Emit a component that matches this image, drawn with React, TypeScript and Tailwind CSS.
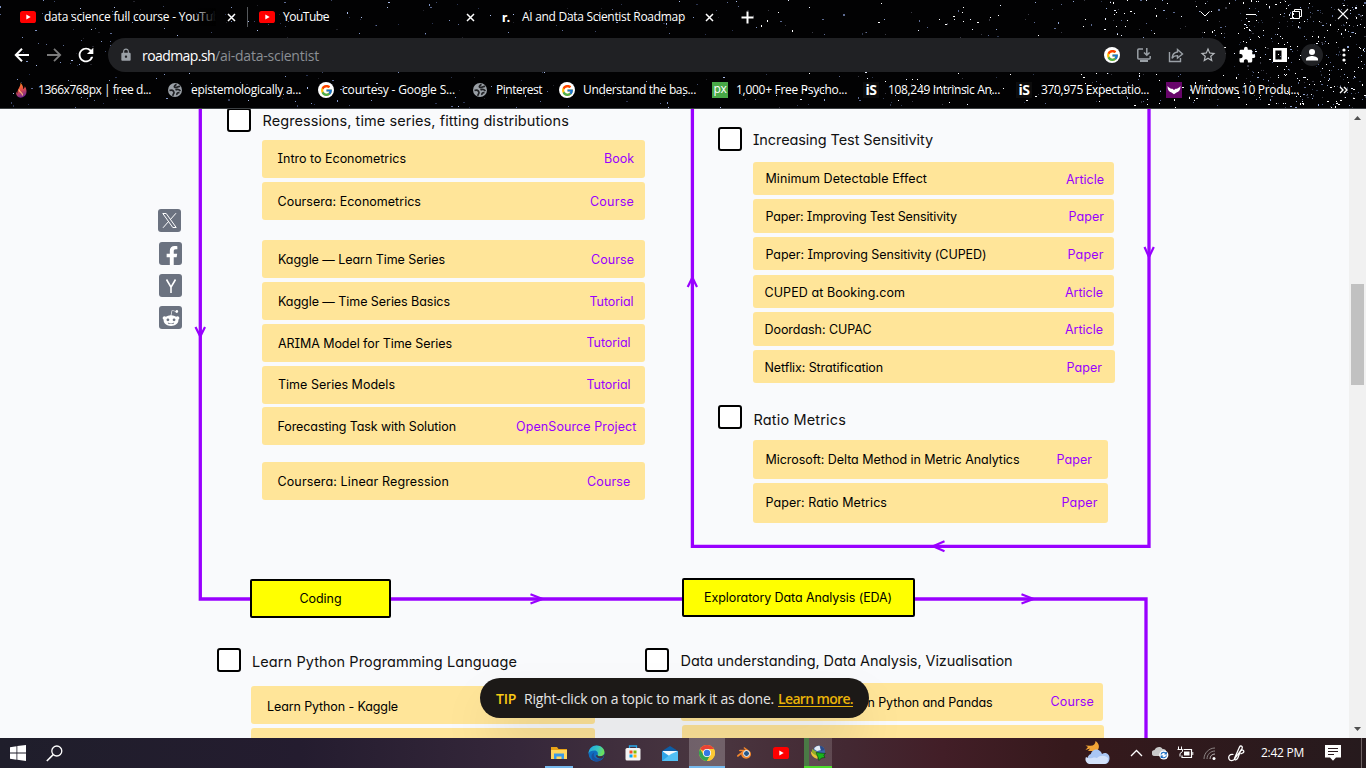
import { useLayoutEffect, useRef, useState, type ReactNode } from "react";
import { FcGoogle } from "react-icons/fc";
import { FaFacebookF, FaRedditAlien } from "react-icons/fa";
import { SiBlender } from "react-icons/si";
import { MdLock, MdExtension, MdRefresh, MdStarOutline } from "react-icons/md";

/* One line of text whose letter spacing is adjusted to fill a given width. */
function Fit({ w, className = "", children }: { w: number; className?: string; children: string }) {
  const ref = useRef<HTMLSpanElement>(null);
  const [spacing, setSpacing] = useState(0);
  useLayoutEffect(() => {
    const el = ref.current;
    if (!el) return;
    el.style.letterSpacing = "0px";
    setSpacing((w - el.getBoundingClientRect().width) / children.length);
  }, [w, children]);
  return (
    <span ref={ref} className={`inline-block shrink-0 whitespace-pre ${className}`} style={{ letterSpacing: `${spacing}px` }}>
      {children}
    </span>
  );
}

/* ---------- Starry theme background ---------- */
function makeStars() {
  let s = 20231;
  const rnd = () => {
    s = (s * 1664525 + 1013904223) % 4294967296;
    return s / 4294967296;
  };
  const dim = ["#2a3350", "#3d4766", "#5c6a92", "#7f93c4", "#23232b", "#a9bbe8"];
  const bright = ["#2f3950", "#5c6a92", "#8fa3d0", "#ffffff", "#e8efff", "#3a3a44", "#ffffff"];
  const out: { x: number; y: number; w: number; h: number; c: string }[] = [];
  for (let i = 0; i < 4200; i++) {
    const x = Math.floor(rnd() * 1366);
    const y = Math.floor(rnd() * 108);
    const keep = x > 1240 ? 1 : x > 1080 ? 0.42 : x > 760 ? 0.18 : 0.15;
    const r = rnd();
    const pal = x > 760 ? bright : dim;
    const c = pal[Math.floor(rnd() * pal.length)];
    const w = rnd() > 0.85 ? 2 : 1;
    const h = rnd() > 0.9 ? 2 : 1;
    if (r < keep) out.push({ x, y, w, h, c });
  }
  return out;
}
const STARS = makeStars();

function Stars() {
  return (
    <svg className="absolute inset-0" width="1366" height="108" shapeRendering="crispEdges">
      {STARS.map((p, i) => (
        <rect key={i} x={p.x} y={p.y} width={p.w} height={p.h} fill={p.c} />
      ))}
    </svg>
  );
}

/* ---------- Small icons ---------- */
const YouTubeIcon = () => (
  <svg width="16" height="12" viewBox="0 0 16 12" className="shrink-0">
    <rect width="16" height="12" rx="2.6" fill="#f00" />
    <path d="M6.3 3.4v5.2L10.7 6z" fill="#fff" />
  </svg>
);
const CloseIcon = () => (
  <svg width="9" height="9" viewBox="0 0 9 9" className="shrink-0">
    <path d="M1 1l7 7M8 1l-7 7" stroke="#fff" strokeWidth="1.5" />
  </svg>
);
const GoogleBadge = () => (
  <span className="flex size-4 shrink-0 items-center justify-center rounded-full bg-white">
    <FcGoogle size={13} />
  </span>
);
const GlobeIcon = () => (
  <svg width="16" height="16" viewBox="0 0 16 16" className="shrink-0">
    <circle cx="8" cy="8" r="7" fill="#9aa0a6" />
    <path
      d="M2.500 8.500C5 7.500 6.500 8.500 7 10.500c.3 1.300-1.300 1.300-1 3.300M13.200 4.500C11 4 10 6 8 5.500 6.500 5 8 3 9.500 2.200M8.500 8c1.500-.8 3.500-.5 5 .8M10 13c-.5-1.500.5-2.500 2.500-2.300"
      stroke="#202124"
      strokeWidth="1.700"
      fill="none"
    />
  </svg>
);
const FlameIcon = () => (
  <svg width="16" height="16" viewBox="0 0 16 16" className="shrink-0">
    <defs>
      <linearGradient id="flame" x1="0" y1="0" x2="0.3" y2="1">
        <stop offset="0" stopColor="#ffa31a" />
        <stop offset="0.5" stopColor="#f0543c" />
        <stop offset="1" stopColor="#7d2a8e" />
      </linearGradient>
    </defs>
    <path d="M7.500 .3c.6 2 3.500 3.800 2.500 7 1-.5 1.800-1.600 1.800-3 2.800 4 2.400 10-2.800 11.200C5 16.300 2.500 13.300 3.200 9.500c.3 1 .7 1.600 1.300 2C3.800 7.500 8 5 7.500 .3z" fill="url(#flame)" />
    <path d="M6 7.500c.2 3 4 3 3.500 6" stroke="#fcc07a" strokeWidth="1.100" fill="none" />
  </svg>
);
const PxIcon = () => (
  <span className="flex size-4 shrink-0 items-center justify-center bg-[#48a947] pb-[2px] font-['Open_Sans',sans-serif] text-[12px] leading-none tracking-[-0.3px] text-white">
    px
  </span>
);
const IsIcon = () => (
  <span className="flex size-4 shrink-0 items-center justify-center bg-[#0c0c0c] font-['Open_Sans',sans-serif] text-[14px] leading-none font-bold tracking-[-0.5px] text-white">
    iS
  </span>
);
const WingIcon = () => (
  <svg width="16" height="16" viewBox="0 0 16 16" className="shrink-0">
    <rect width="16" height="16" fill="#68056b" />
    <path d="M1.500 4C3 6 5 7 6.500 6.800L8 8l1.500-1.200C11 7 13 6 14.500 4c0 4-1.500 6-4 6.500L8 12.200l-2.500-1.700C3 10 1.500 8 1.500 4z" fill="#fff" />
  </svg>
);

/* ---------- Browser chrome ---------- */
function TabStrip() {
  return (
    <div className="flex h-[34px] items-center text-[12px] text-white">
      <div className="flex w-[247px] items-center pl-5">
        <YouTubeIcon />
        <div className="relative ml-2 w-[172px] overflow-hidden">
          <Fit w={176}>data science full course - YouTub</Fit>
          <div className="absolute inset-y-0 right-0 w-6 bg-linear-to-r from-transparent to-black" />
        </div>
        <div className="ml-[11px] flex">
          <CloseIcon />
        </div>
      </div>
      <div className="h-5 w-px bg-[#55585c]" />
      <div className="flex w-[239px] items-center pr-[12px] pl-[11px]">
        <YouTubeIcon />
        <div className="ml-2">
          <Fit w={46}>YouTube</Fit>
        </div>
        <div className="ml-auto flex">
          <CloseIcon />
        </div>
      </div>
      <div className="flex w-[239px] items-center pr-[12px] pl-[15px]">
        <span className="w-[20px] font-['Lato',sans-serif] text-[14px] leading-none font-black">r.</span>
        <Fit w={163}>AI and Data Scientist Roadmap</Fit>
        <div className="ml-auto flex">
          <CloseIcon />
        </div>
      </div>
      <svg width="13" height="13" viewBox="0 0 13 13" className="ml-[15px]">
        <path d="M6.500 .5v12M.5 6.500h12" stroke="#fff" strokeWidth="2" />
      </svg>
      <div className="mb-[6px] ml-auto flex items-center pr-[17px]">
        <svg width="12" height="12" viewBox="0 0 12 12" className="mr-[34px]">
          <path d="M1.500 3.500L6 8l4.500-4.500" stroke="#fff" fill="none" />
        </svg>
        <svg width="12" height="12" viewBox="0 0 12 12" className="mr-[34px]">
          <path d="M1 6.500h10" stroke="#fff" />
        </svg>
        <svg width="12" height="12" viewBox="0 0 12 12" className="mr-[34px]">
          <path d="M1.500 3.500h7v7h-7zM3.500 3.500v-2h7v7h-2" stroke="#fff" fill="none" />
        </svg>
        <svg width="12" height="12" viewBox="0 0 12 12">
          <path d="M1 1l10 10M11 1L1 11" stroke="#fff" strokeWidth="1.100" />
        </svg>
      </div>
    </div>
  );
}

function Toolbar() {
  return (
    <div className="flex h-[42px] items-center">
      <div className="flex w-[108px] items-center pl-[14px]">
        <svg width="16" height="16" viewBox="0 0 16 16">
          <path d="M15 8H2.500M8 1.800L1.800 8 8 14.200" stroke="#fff" strokeWidth="2" fill="none" />
        </svg>
        <svg width="16" height="16" viewBox="0 0 16 16" className="ml-4">
          <path d="M1 8h12.500M8 1.800L14.200 8 8 14.200" stroke="#7b7b7b" strokeWidth="1.800" fill="none" />
        </svg>
        <MdRefresh size={22} className="ml-[13px] shrink-0 text-white" />
      </div>
      <div className="flex h-[34px] w-[1118px] items-center rounded-full bg-[#202124] pr-[10px] pl-[11px] text-[14px]">
        <MdLock size={14} className="text-[#9aa0a6]" />
        <div className="ml-[9px] flex">
          <Fit w={73} className="text-white">roadmap.sh</Fit>
          <Fit w={104} className="text-[#8b8f94]">/ai-data-scientist</Fit>
        </div>
        <div className="ml-auto flex items-center gap-4">
          <GoogleBadge />
          <svg width="16" height="16" viewBox="0 0 16 16" fill="none" stroke="#9aa0a6" strokeWidth="1.500">
            <path d="M7 2H2.800Q1.800 2 1.800 3v8q0 1 1 1h10.400q1 0 1-1V9M10.800 1v7M8 5.500l2.800 2.800 2.800-2.800" />
            <path d="M4 14h8" strokeWidth="2" />
          </svg>
          <svg width="16" height="16" viewBox="0 0 16 16" fill="none" stroke="#9aa0a6" strokeWidth="1.400">
            <path d="M1.500 5v9.500h11V11M9.500 2.500L14.500 7l-5 4V8.600C7 8.600 5.200 9.400 4 11.300 4.300 7.500 6.500 5.400 9.500 5z" />
          </svg>
          <MdStarOutline size={18} className="-mx-px text-[#b4b8bc]" />
        </div>
      </div>
      <div className="flex items-center text-white">
        <MdExtension size={18} className="ml-[12px]" />
        <svg width="14" height="14" viewBox="0 0 14 14" className="ml-[17px]">
          <path d="M1.200 1.200h11.600v11.600H1.200z" stroke="#fff" strokeWidth="2.400" fill="none" />
          <path d="M8.500 1h5v12h-5z" fill="#fff" />
        </svg>
        <div className="ml-[14px] flex size-[22px] items-center justify-center rounded-full bg-[#202124]">
          <svg width="14" height="14" viewBox="0 0 14 14" fill="#fff">
            <circle cx="7" cy="4" r="3" />
            <path d="M1 12.500V11c0-2 4-3 6-3s6 1 6 3v1.500z" />
          </svg>
        </div>
        <svg width="4" height="16" viewBox="0 0 4 16" className="ml-[19px]" fill="#fff">
          <circle cx="2" cy="3" r="1.600" />
          <circle cx="2" cy="8" r="1.600" />
          <circle cx="2" cy="13" r="1.600" />
        </svg>
      </div>
    </div>
  );
}

type Bookmark = { icon: ReactNode; label: string; cell: number; gap: number; w: number };
const BOOKMARKS: Bookmark[] = [
  { icon: <FlameIcon />, label: "1366x768px | free d...", cell: 154, gap: 9, w: 113 },
  { icon: <GlobeIcon />, label: "epistemologically a...", cell: 151, gap: 8, w: 110 },
  { icon: <GoogleBadge />, label: "courtesy - Google S...", cell: 154, gap: 8, w: 113 },
  { icon: <GlobeIcon />, label: "Pinterest", cell: 87, gap: 8, w: 46 },
  { icon: <GoogleBadge />, label: "Understand the bas...", cell: 153, gap: 8, w: 113 },
  { icon: <PxIcon />, label: "1,000+ Free Psycho...", cell: 151, gap: 8, w: 111 },
  { icon: <IsIcon />, label: "108,249 Intrinsic An...", cell: 153, gap: 9, w: 112 },
  { icon: <IsIcon />, label: "370,975 Expectatio...", cell: 150, gap: 9, w: 108 },
  { icon: <WingIcon />, label: "Windows 10 Produ...", cell: 150, gap: 8, w: 109 },
];

function Bookmarks() {
  return (
    <div className="flex h-[28px] items-center pl-[13px] text-[12px] text-white">
      {BOOKMARKS.map((b) => (
        <div key={b.label} className="flex shrink-0 items-center" style={{ width: b.cell, gap: b.gap }}>
          {b.icon}
          <Fit w={b.w}>{b.label}</Fit>
        </div>
      ))}
      <svg width="9" height="8" viewBox="0 0 9 8" className="ml-[23px] shrink-0">
        <path d="M1 1l3 3-3 3M5 1l3 3-3 3" stroke="#fff" strokeWidth="1.400" fill="none" />
      </svg>
    </div>
  );
}

/* ---------- Roadmap diagram ---------- */
const TOP = 109;
/* Text tuples: label, left edge, right edge, vertical centre. */
type Label = [string, number, number, number];
type Card = { x: number; y: number; r: number; b: number; t?: Label; k?: Label };
const CARDS: Card[] = [
  { x: 262, y: 139.5, r: 645, b: 177.5, t: ["Intro to Econometrics", 277.5, 406, 159], k: ["Book", 604, 634, 159] },
  { x: 262, y: 182, r: 645, b: 220, t: ["Coursera: Econometrics", 277.5, 421, 202], k: ["Course", 590, 634, 202] },
  { x: 262, y: 240, r: 645, b: 278, t: ["Kaggle — Learn Time Series", 278, 445, 260], k: ["Course", 591, 634, 260] },
  { x: 262, y: 282, r: 645, b: 320, t: ["Kaggle — Time Series Basics", 278, 450, 302], k: ["Tutorial", 589.5, 633.5, 302] },
  { x: 262, y: 323.5, r: 645, b: 361.5, t: ["ARIMA Model for Time Series", 278, 452, 344], k: ["Tutorial", 586.5, 630.5, 343] },
  { x: 262, y: 365.5, r: 645, b: 403.5, t: ["Time Series Models", 278, 395, 385], k: ["Tutorial", 586.5, 630.5, 385] },
  { x: 262, y: 407, r: 645, b: 445, t: ["Forecasting Task with Solution", 277.5, 456, 427], k: ["OpenSource Project", 516, 636.5, 427] },
  { x: 262, y: 462, r: 645, b: 500, t: ["Coursera: Linear Regression", 277.5, 449, 482], k: ["Course", 587, 630.5, 482] },
  { x: 753, y: 162, r: 1114, b: 195, t: ["Minimum Detectable Effect", 765.5, 927, 179], k: ["Article", 1066, 1104, 180] },
  { x: 753, y: 199, r: 1114, b: 232.500, t: ["Paper: Improving Test Sensitivity", 765.5, 957, 217], k: ["Paper", 1068.5, 1104, 217] },
  { x: 753, y: 237, r: 1114, b: 270, t: ["Paper: Improving Sensitivity (CUPED)", 765.5, 986.5, 255], k: ["Paper", 1067.5, 1103.5, 255] },
  { x: 753, y: 275, r: 1114, b: 308, t: ["CUPED at Booking.com", 764.5, 905, 293], k: ["Article", 1065, 1103, 293] },
  { x: 753, y: 312, r: 1114, b: 345.500, t: ["Doordash: CUPAC", 764.5, 871.5, 330], k: ["Article", 1065, 1103, 330] },
  { x: 753.4, y: 350, r: 1115, b: 383, t: ["Netflix: Stratification", 764.5, 883, 368], k: ["Paper", 1066.5, 1102, 368] },
  { x: 753, y: 440, r: 1108, b: 479, t: ["Microsoft: Delta Method in Metric Analytics", 765.5, 1019.5, 460], k: ["Paper", 1056.5, 1092, 460] },
  { x: 753, y: 483, r: 1108, b: 522.500, t: ["Paper: Ratio Metrics", 765.5, 887, 503], k: ["Paper", 1061.5, 1097.5, 503] },
  { x: 251.4, y: 686.4, r: 595, b: 724.5, t: ["Learn Python - Kaggle", 267, 398, 707] },
  { x: 251.4, y: 728.4, r: 595, b: 766 },
  { x: 681.4, y: 683, r: 1103, b: 720.5, t: ["n Python and Pandas", 867.5, 992.5, 703], k: ["Course", 1050.5, 1094, 702] },
  { x: 682, y: 725.4, r: 1104, b: 763 },
];
const TOPICS: { bx: number; by: number; t: Label }[] = [
  { bx: 227.4, by: 108.4, t: ["Regressions, time series, fitting distributions", 262.5, 569, 121] },
  { bx: 717.6, by: 127, t: ["Increasing Test Sensitivity", 753, 933, 140] },
  { bx: 717.6, by: 405.4, t: ["Ratio Metrics", 753.5, 846, 420] },
  { bx: 217, by: 648.4, t: ["Learn Python Programming Language", 252, 517, 662] },
  { bx: 645, by: 648.4, t: ["Data understanding, Data Analysis, Vizualisation", 680.5, 1012.5, 661] },
];
const HUBS: { x: number; y: number; w: number; label: string; tw: number }[] = [
  { x: 250, y: 579, w: 141, label: "Coding", tw: 42 },
  { x: 681.6, y: 578.4, w: 233, label: "Exploratory Data Analysis (EDA)", tw: 188 },
];

function NodeText({ t, className }: { t: Label; className: string }) {
  return (
    <div className="absolute flex h-5 items-center" style={{ left: t[1], top: t[3] - 10 - TOP }}>
      <Fit w={t[2] - t[1]} className={className}>
        {t[0]}
      </Fit>
    </div>
  );
}

function Roadmap() {
  return (
    <div className="relative flex-1 overflow-hidden bg-[#f9fafc] font-['Inter',sans-serif] [font-feature-settings:'cv11','cv08']">
      <svg className="absolute inset-0" width="1349" height="629" viewBox="0 109 1349 629" fill="none" stroke="#9900ff">
        <path d="M200.300 100V599H1146V760" strokeWidth="3.300" />
        <path d="M692.400 100V546.300H1149V100" strokeWidth="3.300" />
        <path
          d="M195.500 327L200.300 336.500 205 327M687.700 287L692.400 277.500 697 287M1144.500 247L1149 257 1153.800 247M944.500 541.300L933 546.300 944.500 551.300M530.500 594.300L542.500 599 530.500 603.500M1021.500 594.300L1033.500 599 1021.500 603.500"
          strokeWidth="2.200"
        />
      </svg>
      {CARDS.map((c, i) => (
        <div
          key={i}
          className="absolute rounded-[3px] bg-[#ffe599]"
          style={{ left: c.x, top: c.y - TOP, width: c.r - c.x, height: c.b - c.y }}
        />
      ))}
      {CARDS.map((c, i) => (
        <div key={i}>
          {c.t && <NodeText t={c.t} className="text-[12.5px] text-black" />}
          {c.k && <NodeText t={c.k} className="text-[12.5px] text-[#9900ff]" />}
        </div>
      ))}
      {TOPICS.map((t) => (
        <div key={t.t[0]}>
          <div className="absolute size-[24px] rounded-[3px] border-2 border-black bg-white" style={{ left: t.bx, top: t.by - TOP }} />
          <NodeText t={t.t} className="text-[14.5px] text-[#111]" />
        </div>
      ))}
      {HUBS.map((h) => (
        <div
          key={h.label}
          className="absolute flex h-[39px] items-center justify-center rounded-[2px] border-2 border-black bg-[#ffff00] pt-px text-[12.5px] text-black"
          style={{ left: h.x, top: h.y - TOP, width: h.w }}
        >
          <Fit w={h.tw}>{h.label}</Fit>
        </div>
      ))}
      <ShareBar />
      <Tip />
    </div>
  );
}

function ShareBar() {
  const tile = "flex size-[23px] items-center justify-center overflow-hidden rounded-[3px] bg-[#6b7280] text-white";
  return (
    <div className="absolute top-[100px] left-[158px] flex flex-col gap-[9px]">
      <div className={tile}>
        <svg width="17" height="17" viewBox="0 0 17 17" fill="none" stroke="#fff" strokeWidth="1">
          <path d="M1.800 1.500h3.400l10 14h-3.400zM15 1.200L9.600 7.300M7.400 9.700L2 15.800" />
        </svg>
      </div>
      <div className={`${tile} mt-px ml-px`}>
        <FaFacebookF size={20} className="mt-[4px] ml-[3px] shrink-0" />
      </div>
      <div className={`${tile} ml-px`}>
        <svg width="12" height="14" viewBox="0 0 12 14" fill="none" stroke="#fff" strokeWidth="1.600">
          <path d="M1.500 .5L6 8.200 10.500 .5M6 8v6" />
        </svg>
      </div>
      <div className={`${tile} ml-px`}>
        <FaRedditAlien size={18} />
      </div>
    </div>
  );
}

function Tip() {
  return (
    <div className="absolute top-[569px] left-[480px] flex h-10 w-[389px] items-center rounded-full bg-[#1c1917] pt-px pl-4 font-['Open_Sans',sans-serif] text-[14px] text-[#e5e5e5] shadow-2xl">
      <Fit w={20} className="font-semibold text-[#facc15]">TIP</Fit>
      <div className="ml-2">
        <Fit w={250}>Right-click on a topic to mark it as done.</Fit>
      </div>
      <div className="ml-1">
        <Fit w={75} className="font-semibold text-[#eab308] underline underline-offset-2">Learn more.</Fit>
      </div>
    </div>
  );
}

function Scrollbar() {
  return (
    <div className="flex w-[17px] flex-col items-center bg-[#f1f1f1]">
      <svg width="7" height="4" viewBox="0 0 7 4" className="mt-[7px]" fill="#505050">
        <path d="M0 4h7L3.500 0z" />
      </svg>
      <div className="mt-[164px] h-[101px] w-[13px] bg-[#c1c1c1]" />
      <svg width="7" height="4" viewBox="0 0 7 4" className="mt-auto mb-[7px]" fill="#505050">
        <path d="M0 0h7L3.500 4z" />
      </svg>
    </div>
  );
}

/* ---------- Taskbar ---------- */
const FolderIcon = () => (
  <svg width="16" height="16" viewBox="0 0 16 16">
    <path d="M0 2h6l1.500 2H16v10H0z" fill="#e8a317" />
    <path d="M0 5h16v9H0z" fill="#ffd75e" />
    <path d="M3 8.500h10V14h-2.500v-2.500h-5V14H3z" fill="#3a9be8" />
  </svg>
);
const EdgeIcon = () => (
  <svg width="17" height="17" viewBox="0 0 17 17">
    <defs>
      <linearGradient id="edge" x1="0" y1="0" x2="1" y2="0.300">
        <stop offset="0" stopColor="#1ea2e0" />
        <stop offset="0.600" stopColor="#35c5c5" />
        <stop offset="1" stopColor="#6be05c" />
      </linearGradient>
    </defs>
    <circle cx="8.500" cy="8.500" r="8" fill="#0f6cbf" />
    <path d="M.5 8.500C.7 3.500 4.500.5 8.500.5c5 0 8 3.500 8 6.800 0 2.600-2 4-4.300 4-1.800 0-3-.6-2.600-1.500.9-1.500-.2-4.300-3.100-4.300C3.500 5.500 1.300 6.800.5 8.500z" fill="url(#edge)" />
    <path d="M6.500 7.500c-2 2.500 0 6.500 4 6.500 2 0 3.600-.8 4.700-2-1.200 3-4 4.500-6.700 4.500-3 0-5-2.500-5-5 0-2 1.300-3.500 3-4z" fill="#1a4f9c" />
    <path d="M9.500 9.800c-.4 1 .8 1.500 2.700 1.500 1.800 0 3.400-.8 4.100-2.200-.2 1.500-.8 3-1.700 3.800-3 1.500-6.600 0-6.600-2.300z" fill="#3d3240" />
  </svg>
);
const StoreIcon = () => (
  <svg width="16" height="16" viewBox="0 0 16 16">
    <path d="M4.500 4V1h7v3" stroke="#28a8ea" strokeWidth="1.300" fill="none" />
    <rect x=".5" y="3" width="15" height="12.500" rx="1.500" fill="#f4f4f4" />
    <path d="M4.500 5.500h3v3h-3z" fill="#f35325" />
    <path d="M8.500 5.500h3v3h-3z" fill="#81bc06" />
    <path d="M4.500 9.500h3v3h-3z" fill="#05a6f0" />
    <path d="M8.500 9.500h3v3h-3z" fill="#ffba08" />
  </svg>
);
const MailIcon = () => (
  <svg width="16" height="15" viewBox="0 0 16 15">
    <path d="M0 5l8-5 8 5v3H0z" fill="#0d5ea6" />
    <path d="M1 5h14v5H1z" fill="#f2f8fd" />
    <path d="M0 5l8 5.500L16 5v10H0z" fill="#2fa4e7" />
    <path d="M0 15l9-7 7-3v10z" fill="#52c0f5" />
  </svg>
);
const ChromeIcon = () => (
  <svg width="16" height="16" viewBox="0 0 16 16">
    <circle cx="8" cy="8" r="8" fill="#fcc934" />
    <path d="M8 8L1.070 4A8 8 0 0 1 14.930 4H8z" fill="#e94335" />
    <path d="M1.070 4A8 8 0 0 0 8 16L11.460 10 8 8 4.540 10z" fill="#34a353" />
    <path d="M14.930 4A8 8 0 0 1 8 16l3.460-6L8 4z" fill="#fcc934" />
    <circle cx="8" cy="8" r="4" fill="#fff" />
    <circle cx="8" cy="8" r="3.200" fill="#3478e5" />
  </svg>
);
const IdmIcon = () => (
  <svg width="17" height="16" viewBox="0 0 17 16">
    <circle cx="9" cy="6.500" r="6" fill="#3c68a8" />
    <path d="M4 4Q6 .5 9.500 .8L11 5 7 6z" fill="#e3ebf5" />
    <path d="M10 1q4 .8 4.500 4L11 6z" fill="#2a4a88" />
    <path d="M2 4Q1 10 8 11l-1-4z" fill="#8fae2a" />
    <path d="M.8 6q0 6 6.500 8l.7-2.500Q3.500 10 .8 6z" fill="#e8c437" />
    <path d="M6 7.500l9.500 1-1.700 1.500 1.200 2.500-3.500.5-2.500 2.500L8 12.200z" fill="#19b31d" stroke="#063c08" strokeWidth=".6" />
  </svg>
);

function Taskbar() {
  return (
    <div className="flex h-[30px] items-center bg-linear-[90deg,#1f1e2b_0%,#241c2f_22%,#35273a_38%,#4a3640_52%,#432832_62%,#421e27_69%,#36191c_78%,#261a1d_100%]">
      <div className="flex w-[545px] items-center pl-[10px]">
        <svg width="16" height="16" viewBox="0 0 16 16" fill="#fff">
          <path d="M0 2.200L6.500 1.200v6.300H0zM7.300 1.100L16 0v7.500H7.300zM0 8.400h6.500v6.300L0 13.800zM7.300 8.400H16V16l-8.700-1.200z" />
        </svg>
        <svg width="17" height="17" viewBox="0 0 17 17" className="ml-5" fill="none" stroke="#fff">
          <circle cx="10.800" cy="6" r="5" strokeWidth="1.300" />
          <path d="M7.200 9.600L.8 16" strokeWidth="1.500" />
        </svg>
      </div>
      <div className="flex h-full w-7 items-center justify-center border-b-2 border-[#76b9ed] pt-[2px]"><FolderIcon /></div>
      <div className="flex w-[46px] justify-center"><EdgeIcon /></div>
      <div className="flex w-[27px] justify-center"><StoreIcon /></div>
      <div className="flex w-[43px] justify-center pl-[5px]"><MailIcon /></div>
      <div className="flex h-full w-9 items-center justify-center border-b-2 border-[#76b9ed] bg-white/22 pt-[2px]"><ChromeIcon /></div>
      <div className="relative flex w-[38px] justify-center">
        <SiBlender size={14} className="text-[#f5872c]" />
        <span className="absolute top-[4px] left-[18px] size-[7px] rounded-full border-[1.500px] border-white bg-[#265787]" />
      </div>
      <div className="flex w-[36px] justify-center"><YouTubeIcon /></div>
      <div className="ml-[5px] flex h-full w-7 items-center justify-center border-b-2 border-[#4ddb2c] bg-linear-[90deg,#4a7a45_0_5px,#ffffff26_5px] pt-[2px]"><IdmIcon /></div>
      <div className="ml-auto flex h-full items-center">
        <svg width="25" height="24" viewBox="0 0 25 24" className="mr-px">
          <path d="M10.500 0c4 2.500 4.500 7 1.500 10H3l2-2.500-4.500 1.500L3 6 .5 4.500l4.500.3C8.500 5 10.500 3 10.500 0z" fill="#f3a536" />
          <path d="M5.500 23a5.500 5.500 0 0 1 .3-10c1.500-6 9.500-6 11.200 0C21 10.500 25 13.500 24.500 18c-.3 3-2 5-5 5z" fill="#a9c6f3" />
          <path d="M4 23a5 5 0 0 1-3-7c4 3 8-1 11 1 3-3 8-3 11 0 0 4-1 6-4 6z" fill="#d3e2fa" />
        </svg>
        <svg width="13" height="8" viewBox="0 0 13 8" className="ml-[19px]">
          <path d="M1 7l5.500-5.500L12 7" stroke="#fff" strokeWidth="1.300" fill="none" />
        </svg>
        <svg width="17" height="14" viewBox="0 0 17 14" className="ml-[9px]">
          <path d="M3 10a3 3 0 0 1-.5-6C4 .5 9 0 10.500 3 13 2.500 15 4.500 14 7L9 10z" fill="#c9c9c9" />
          <circle cx="11.800" cy="9" r="4.600" fill="#fff" />
          <path d="M9 8.500c.5-2.500 4-3 5-1m.3-1.500v2h-2M14.500 9.500c-.5 2.500-4 3-5 1M9.200 12v-2h2" stroke="#1d6dc0" strokeWidth="1.200" fill="none" />
        </svg>
        <svg width="17" height="14" viewBox="0 0 17 14" className="ml-[8px]" fill="none" stroke="#fff">
          <path d="M6.500 3.500h8v8H5V9.500" strokeWidth="1.200" />
          <path d="M15.800 6v3M1.500 .5v3M4.500 .5v3M.5 3.500h5v2L3 7.500v3" />
          <path d="M7 5.500h5.500v4H7z" fill="#fff" stroke="none" />
        </svg>
        <svg width="13" height="13" viewBox="0 0 13 13" className="ml-[9px]" fill="none">
          <path d="M1 12C1 6 6 1 12 1M4 12c0-4.500 3.500-8 8-8" stroke="#8d8585" />
          <path d="M7 12c0-3 2-5 5-5" stroke="#b9b2b2" />
          <circle cx="11" cy="11.500" r="1.500" fill="#fff" />
        </svg>
        <svg width="17" height="17" viewBox="0 0 17 17" className="ml-[12px]" fill="none" stroke="#fff" strokeWidth="1.300">
          <path d="M5.500 9.500C2 8.500 0 11.500 1 14s4.500 2 6-.500L14 3.500C15 1 12.500 0 11.500 2L6.500 13.500c0 2.500 3 1 3.500-1L12.500 6c2-2 4-.5 3 1.500l-3 1.500" />
        </svg>
        <div className="ml-4 text-[12px] text-white">
          <Fit w={43}>2:42 PM</Fit>
        </div>
        <svg width="16" height="16" viewBox="0 0 16 16" className="ml-[21px]">
          <path d="M0 0h16v12.500h-5L8 15.800 5 12.500H0z" fill="#fff" />
          <path d="M3 3.500h10M3 6.500h10M3 9.500h6" stroke="#2a1b1e" strokeWidth="1.200" />
        </svg>
        <div className="ml-[20px] h-full w-px bg-[#6e6263]" />
        <div className="w-1" />
      </div>
    </div>
  );
}

export default function App() {
  return (
    <div className="flex h-[768px] w-[1366px] flex-col overflow-hidden bg-black font-['Open_Sans',sans-serif]">
      <header className="relative h-[109px] border-b border-[#3c4043] bg-[#020203]">
        <Stars />
        <div className="relative">
          <TabStrip />
          <Toolbar />
          <Bookmarks />
        </div>
      </header>
      <main className="flex h-[629px]">
        <Roadmap />
        <Scrollbar />
      </main>
      <Taskbar />
    </div>
  );
}
